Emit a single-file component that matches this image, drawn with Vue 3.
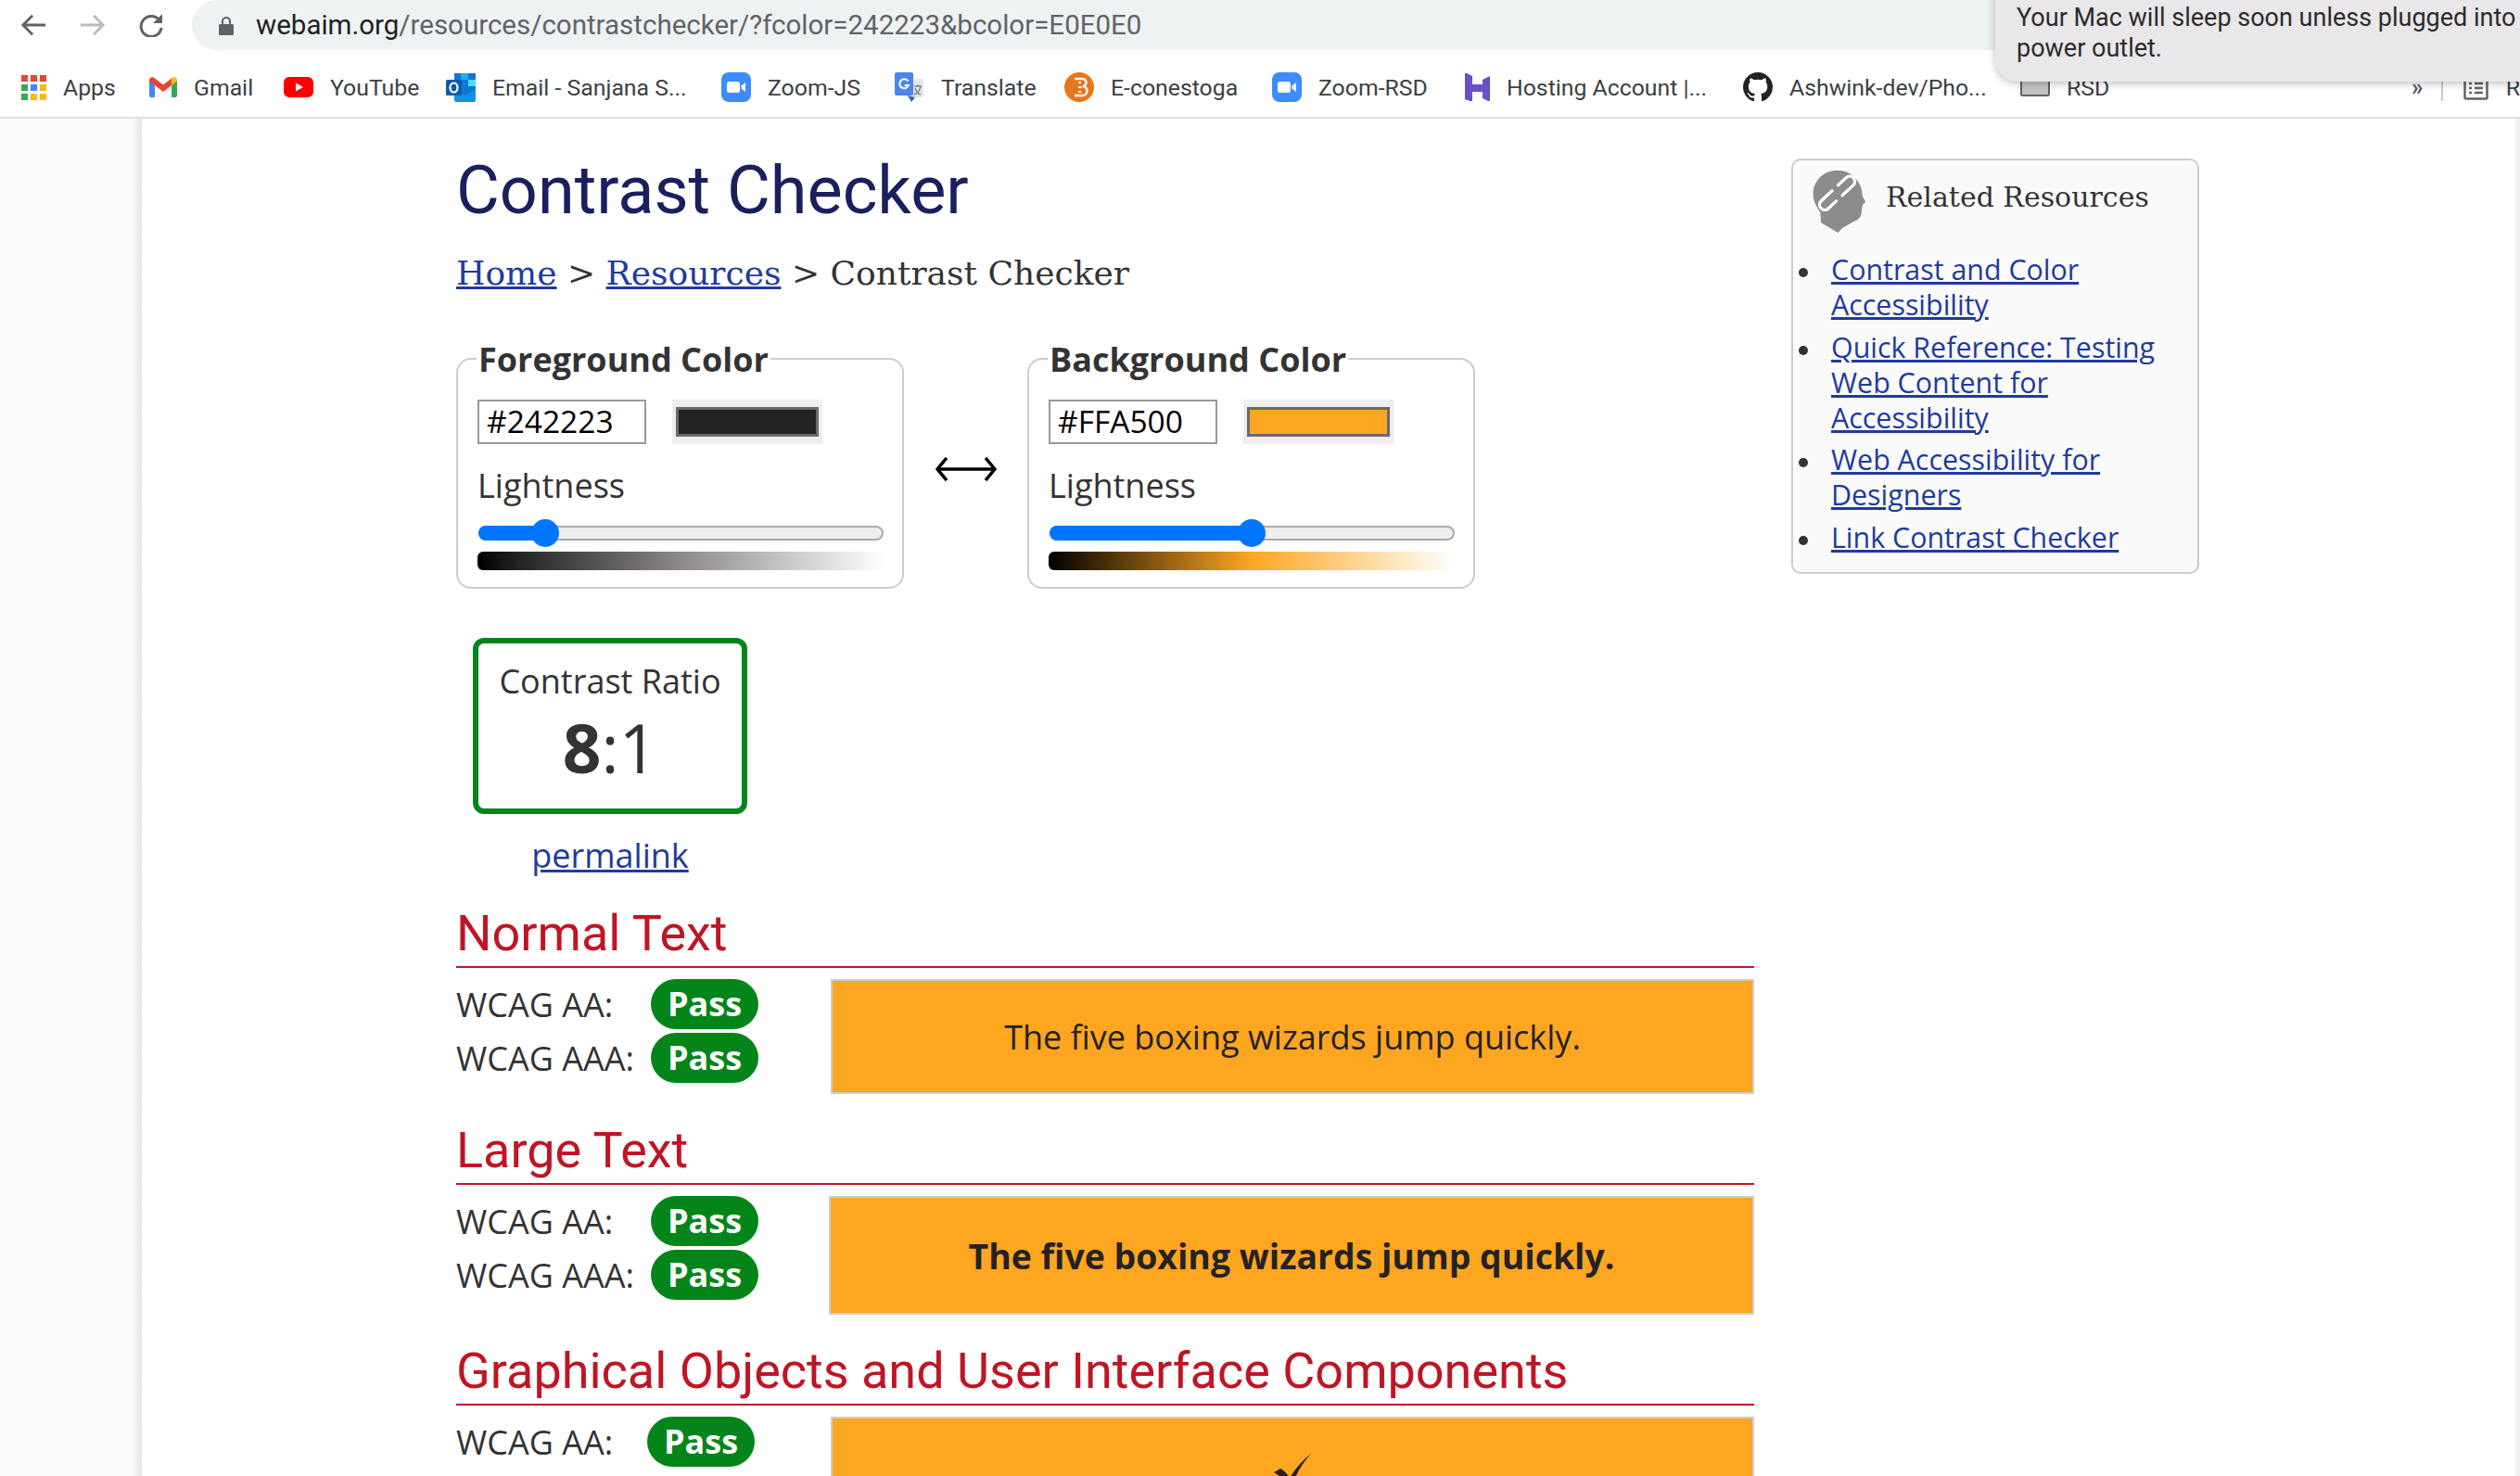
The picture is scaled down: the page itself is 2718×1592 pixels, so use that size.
<template>
  <div class="screen">
    <div class="toast">Your Mac will sleep soon unless plugged into<br />power outlet.</div>

    <div class="toolbar">
      <svg class="nav" viewBox="0 0 30 26" fill="none" stroke="#5f6368" stroke-width="3"><path d="M29 13H4M14 2 3 13l11 11" /></svg>
      <svg class="nav fwd" viewBox="0 0 30 26" fill="none" stroke="#b9bbbe" stroke-width="3"><path d="M1 13h25M16 2l11 11-11 11" /></svg>
      <svg class="nav reload" viewBox="0 0 28 26" fill="none"><path d="M23 8a11 11 0 1 0 2 8" stroke="#5f6368" stroke-width="3" /><path d="M26 1v10H16z" fill="#5f6368" /></svg>
      <div class="address">
        <svg class="lock" viewBox="0 0 16 21"><path d="M3 9V6a5 5 0 0 1 10 0v3h1.500A1.500 1.500 0 0 1 16 10.500v9a1.500 1.500 0 0 1-1.500 1.500h-13A1.500 1.500 0 0 1 0 19.500v-9A1.500 1.500 0 0 1 1.500 9zm2 0h6V6a3 3 0 0 0-6 0z" fill="#5f6368" /></svg>
        <span class="url"><b>webaim.org</b>/resources/contrastchecker/?fcolor=242223&amp;bcolor=E0E0E0</span>
      </div>
    </div>

    <div class="bookmarks">
      <div v-for="b in bookmarks" :key="b.label" class="bookmark">
        <span v-if="b.icon === 'apps'" class="apps">
          <i v-for="(c, i) in appColors" :key="i" :style="{ background: c }"></i>
        </span>
        <svg v-else-if="b.icon === 'gmail'" class="ico gmail" viewBox="0 0 30 22">
          <path d="M0 3v17a2 2 0 0 0 2 2h4V9z" fill="#4285f4" />
          <path d="M30 3v17a2 2 0 0 1-2 2h-4V9z" fill="#34a853" />
          <path d="M0 3.500C0 .5 3 -.8 5.500 1L15 8.500 24 1.500 24 9 15 16 6 9 0 4.500z" fill="#ea4335" />
          <path d="M24 1.500C26.500 -.8 30 .5 30 3.500V4.500L24 9z" fill="#fbbc05" />
        </svg>
        <svg v-else-if="b.icon === 'youtube'" class="ico yt" viewBox="0 0 32 22">
          <rect width="32" height="22" rx="6" fill="#f00" />
          <path d="M13 6.500v9l8-4.500z" fill="#fff" />
        </svg>
        <svg v-else-if="b.icon === 'outlook'" class="ico" viewBox="0 0 32 32">
          <rect x="9" y="1" width="23" height="27" fill="#0f78d4" />
          <rect x="16" y="1" width="8" height="7" fill="#28a8ea" />
          <rect x="24" y="8" width="8" height="7" fill="#50d9ff" />
          <path d="M9 18l12 7 11-7v12a2 2 0 0 1-2 2H11a2 2 0 0 1-2-2z" fill="#1490df" />
          <rect y="8" width="17" height="17" rx="1.500" fill="#0a5ca8" />
          <ellipse cx="8.500" cy="16.500" rx="4" ry="5" fill="none" stroke="#fff" stroke-width="2.200" />
        </svg>
        <svg v-else-if="b.icon === 'zoom'" class="ico" viewBox="0 0 32 32">
          <rect width="32" height="32" rx="8" fill="#3d8bfd" />
          <rect x="6" y="10" width="14" height="12" rx="2.500" fill="#fff" />
          <path d="M21.500 14.500 26 11v10l-4.500-3.500z" fill="#fff" />
        </svg>
        <svg v-else-if="b.icon === 'translate'" class="ico" viewBox="0 0 32 32">
          <rect x="12" y="7" width="19" height="20" rx="1.500" fill="#e3e6ea" />
          <rect width="20" height="25" rx="2" fill="#4a86e8" />
          <path d="M14 25l4 7 4-5z" fill="#3a62b8" />
          <path d="M14.500 9.500A5 5 0 1 0 15 14h-4.500" fill="none" stroke="#fff" stroke-width="2" />
          <path d="M21 15h8M25 13v2M28 15c-1 5-4 8-7 9M22 17c1 3 3 6 6 7" fill="none" stroke="#7d8590" stroke-width="1.400" />
        </svg>
        <svg v-else-if="b.icon === 'conestoga'" class="ico" viewBox="0 0 32 32">
          <circle cx="16" cy="16" r="16" fill="#e8761c" />
          <path d="M11 7h8a4 4 0 0 1 1 8 4.500 4.500 0 0 1-1 10h-8" fill="none" stroke="#fff" stroke-width="2.500" />
          <path d="M15 11h3M15 16h4M15 21h3" stroke="#fff" stroke-width="2" />
        </svg>
        <svg v-else-if="b.icon === 'hosting'" class="ico host" viewBox="0 0 27 30">
          <path d="M0 0l8 4v9l11 0V8l8-4v12H0z" fill="#6a4fc8" transform="translate(0 -1)" />
          <path d="M0 14h27v16l-8-4v-7H8v11l-8-3z" fill="#6a4fc8" transform="translate(0 1)" />
        </svg>
        <svg v-else-if="b.icon === 'github'" class="ico" viewBox="0 0 16 16">
          <path fill="#1f2328" d="M8 0C3.580 0 0 3.580 0 8c0 3.540 2.290 6.530 5.470 7.590.4.070.55-.17.55-.38 0-.19-.01-.82-.01-1.490-2.010.37-2.530-.49-2.690-.94-.09-.23-.48-.94-.82-1.130-.28-.15-.68-.52-.01-.53.63-.01 1.080.58 1.230.82.720 1.210 1.870.870 2.330.660.070-.520.280-.870.510-1.070-1.780-.2-3.640-.89-3.640-3.950 0-.87.310-1.590.820-2.150-.08-.2-.36-1.020.08-2.120 0 0 .67-.21 2.200.82.640-.18 1.320-.27 2-.27s1.360.09 2 .27c1.530-1.040 2.200-.82 2.200-.82.440 1.100.16 1.920.08 2.120.51.560.82 1.270.82 2.150 0 3.070-1.870 3.750-3.650 3.950.29.250.54.730.54 1.480 0 1.070-.01 1.930-.01 2.200 0 .21.150.46.550.38A8.010 8.010 0 0 0 16 8c0-4.420-3.580-8-8-8z" />
        </svg>
        <svg v-else-if="b.icon === 'folder'" class="ico folder" viewBox="0 0 32 20">
          <rect x="1" y="1" width="30" height="18" rx="1.500" fill="#c4c4c4" stroke="#5f6368" stroke-width="2" />
        </svg>
        <span class="bm-label" :style="{ width: b.w + 'px' }">{{ b.label }}</span>
      </div>
      <div class="spacer"></div>
      <div class="tail">
        <span class="more">»</span>
        <span class="sep"></span>
        <svg class="list" viewBox="0 0 27 28" fill="none" stroke="#5f6368" stroke-width="2.500">
          <rect x="1.500" y="1.500" width="24" height="25" rx="1.500" />
          <path d="M6 10h3M12 10h9M6 15h3M12 15h9M6 20h3M12 20h9" />
        </svg>
        <span class="bm-label">R</span>
      </div>
    </div>

    <div class="page">
      <div class="gutter"></div>
      <div class="sheet">
        <main class="content">
          <h1>Contrast Checker</h1>
          <p class="crumbs"><a>Home</a> &gt; <a>Resources</a> &gt; Contrast Checker</p>

          <div class="pickers">
            <fieldset v-for="p in pickers" :key="p.title" class="picker">
              <legend>{{ p.title }}</legend>
              <div class="color-row">
                <input class="hex" type="text" :value="p.hex" readonly />
                <div class="swatch"><div :style="{ background: p.swatch }"></div></div>
              </div>
              <div class="lightness">Lightness</div>
              <div class="slider">
                <div class="fill" :style="{ width: p.pos + 'px' }"></div>
                <div class="thumb" :style="{ left: p.pos - 15 + 'px' }"></div>
              </div>
              <div class="ramp" :style="{ background: p.ramp }"></div>
            </fieldset>
            <svg class="swap" viewBox="0 0 66 26" fill="none" stroke="#000">
              <path d="M4 13h58" stroke-width="3.500" />
              <path d="M12 1 2 13l10 12M54 1l10 12-10 12" stroke-width="3.500" />
            </svg>
          </div>

          <div class="ratio-wrap">
            <div class="ratio">
              <div class="ratio-title">Contrast Ratio</div>
              <div class="ratio-value"><b>8</b>:1</div>
            </div>
            <a class="permalink">permalink</a>
          </div>

          <section class="result">
            <h2>Normal Text</h2>
            <div class="result-body">
              <div class="levels">
                <div class="level"><span class="lvl">WCAG AA:</span><span class="pass">Pass</span></div>
                <div class="level"><span class="lvl">WCAG AAA:</span><span class="pass">Pass</span></div>
              </div>
              <div class="sample normal">The five boxing wizards jump quickly.</div>
            </div>
          </section>

          <section class="result">
            <h2>Large Text</h2>
            <div class="result-body">
              <div class="levels wide">
                <div class="level"><span class="lvl">WCAG AA:</span><span class="pass">Pass</span></div>
                <div class="level"><span class="lvl">WCAG AAA:</span><span class="pass">Pass</span></div>
              </div>
              <div class="sample large">The five boxing wizards jump quickly.</div>
            </div>
          </section>

          <section class="result">
            <h2>Graphical Objects and User Interface Components</h2>
            <div class="result-body">
              <div class="levels">
                <div class="level tight"><span class="lvl">WCAG AA:</span><span class="pass">Pass</span></div>
              </div>
              <div class="sample graphic">
                <svg class="check" viewBox="0 0 44 40"><path d="M42 0C32 10 24 24 20 38h-3C13 30 8 25 1 21l7-4c4 2 7 5 10 10C24 17 32 8 42 0z" fill="#242223" /></svg>
              </div>
            </div>
          </section>
        </main>

        <aside class="related">
          <div class="related-head">
            <svg class="head" viewBox="165 98 175 210">
              <path d="M245 100C200 100 166 135 166 178c0 27 14 44 24 62l2 32 56 33 14-15 38-22c18-6 25-18 25-32l3-21 10-11-10-19C328 140 295 100 245 100z" fill="#8c8c8c" />
              <g fill="none" stroke="#fff" stroke-width="10" stroke-linecap="round" transform="rotate(-43 245 175)">
                <path d="M238 158H189a17 17 0 0 0 0 34h36" />
                <path d="M252 192h49a17 17 0 0 0 0-34h-36" />
              </g>
            </svg>
            <h3>Related Resources</h3>
          </div>
          <ul>
            <li v-for="r in related" :key="r"><a>{{ r }}</a></li>
          </ul>
        </aside>
      </div>
      <div class="gutter-right"></div>
    </div>
  </div>
</template>

<script setup>
const appColors = ["#ea4335", "#ea4335", "#ea4335", "#34a853", "#4285f4", "#fbbc05", "#34a853", "#fbbc05", "#fbbc05"];

const bookmarks = [
  { icon: "apps", label: "Apps", w: 59 },
  { icon: "gmail", label: "Gmail", w: 63 },
  { icon: "youtube", label: "YouTube", w: 91 },
  { icon: "outlook", label: "Email - Sanjana S...", w: 213 },
  { icon: "zoom", label: "Zoom-JS", w: 103 },
  { icon: "translate", label: "Translate", w: 99 },
  { icon: "conestoga", label: "E-conestoga", w: 140 },
  { icon: "zoom", label: "Zoom-RSD", w: 124 },
  { icon: "hosting", label: "Hosting Account |...", w: 221 },
  { icon: "github", label: "Ashwink-dev/Pho...", w: 215 },
  { icon: "folder", label: "RSD", w: 48 },
];

const pickers = [
  {
    title: "Foreground Color",
    hex: "#242223",
    swatch: "#242223",
    pos: 70,
    ramp: "linear-gradient(to right, #000, #242223 10%, #8d8889 50%, #fff)",
  },
  {
    title: "Background Color",
    hex: "#FFA500",
    swatch: "#ffa621",
    pos: 216,
    ramp: "linear-gradient(to right, #000, #ffa621 50%, #fff)",
  },
];

const related = [
  "Contrast and Color Accessibility",
  "Quick Reference: Testing Web Content for Accessibility",
  "Web Accessibility for Designers",
  "Link Contrast Checker",
];
</script>

<style>
html,
body {
  margin: 0;
  overflow: hidden;
  background: #fff;
}
</style>

<style scoped>
.screen {
  position: relative;
  width: 2718px;
  height: 1592px;
  overflow: hidden;
  font-family: "Open Sans", sans-serif;
  color: #333;
}

.toast {
  position: absolute;
  top: -20px;
  left: 2152px;
  width: 600px;
  height: 108px;
  box-sizing: border-box;
  padding: 23px 0 0 23px;
  border-radius: 0 0 0 24px;
  background: #e9e7e9;
  box-shadow: 0 2px 10px rgba(0, 0, 0, 0.25);
  font-family: Roboto, sans-serif;
  font-size: 27px;
  line-height: 33px;
  color: #2b2b2b;
  white-space: nowrap;
  z-index: 5;
}

.toolbar {
  display: flex;
  align-items: center;
  height: 54px;
  padding-left: 22px;
}

.nav {
  width: 28px;
  height: 26px;
  flex: none;
}

.fwd {
  margin-left: 36px;
}

.reload {
  margin-left: 35px;
}

.address {
  display: flex;
  align-items: center;
  flex: 1;
  height: 54px;
  margin-left: 30px;
  border-radius: 27px 0 0 27px;
  background: #eff2f3;
}

.lock {
  width: 16px;
  height: 21px;
  margin-left: 29px;
}

.url {
  margin-left: 24px;
  font-family: Roboto, sans-serif;
  font-size: 29.5px;
  color: #5f6368;
  white-space: nowrap;
}

.url b {
  font-weight: 400;
  color: #202124;
}

.bookmarks {
  display: flex;
  align-items: center;
  gap: 34px;
  height: 64px;
  padding: 8px 0 0 23px;
  border-bottom: 2px solid #dde1e5;
}

.bookmark {
  display: flex;
  align-items: center;
  gap: 18px;
  flex: none;
}

.bm-label {
  font-family: Roboto, sans-serif;
  font-size: 24.8px;
  color: #3c4043;
  white-space: nowrap;
}

.apps {
  display: grid;
  grid-template-columns: repeat(3, 7px);
  gap: 3px;
}

.apps i {
  height: 7px;
}

.ico {
  width: 32px;
  height: 32px;
  flex: none;
}

.gmail {
  width: 30px;
  height: 22px;
}

.yt {
  height: 22px;
}

.host {
  width: 27px;
  height: 30px;
}

.folder {
  height: 20px;
}

.spacer {
  flex: 1;
}

.tail {
  display: flex;
  align-items: center;
  flex: none;
  width: 117px;
  overflow: hidden;
}

.more {
  width: 35px;
  font-family: Roboto, sans-serif;
  font-size: 25px;
  font-weight: 700;
  color: #5f6368;
}

.sep {
  width: 2px;
  height: 30px;
  background: #ccc;
  flex: none;
}

.list {
  width: 27px;
  height: 28px;
  margin: 0 19px 0 22px;
  flex: none;
}

.page {
  display: flex;
  height: 1464px;
}

.gutter {
  flex: none;
  width: 153px;
  background: linear-gradient(to right, #fafbfb 142px, #e6e7e7 153px);
}

.gutter-right {
  flex: none;
  width: 5px;
  background: #f1f1f1;
}

.sheet {
  display: flex;
  align-items: flex-start;
  gap: 40px;
  flex: 1;
  padding-left: 339px;
  background: #fff;
}

.content {
  flex: none;
  width: 1400px;
}

h1 {
  margin: 36px 0 0;
  font-family: Roboto, sans-serif;
  font-size: 72px;
  font-weight: 400;
  line-height: 84px;
  color: #1a1f5e;
}

a {
  color: #1f3b9c;
  text-decoration: underline;
}

.crumbs {
  margin: 25px 0 0;
  font-family: "DejaVu Serif", serif;
  font-size: 36px;
  line-height: 44px;
  color: #333;
}

.pickers {
  position: relative;
  display: flex;
  gap: 133px;
  margin: 52px 0 0;
}

.picker {
  box-sizing: border-box;
  width: 483px;
  height: 266px;
  margin: 0;
  padding: 0 21px;
  border: 2px solid #ccc;
  border-radius: 16px;
  min-width: 0;
}

.picker legend {
  position: relative;
  top: 1px;
  padding: 0 2px;
  margin-left: -1px;
  font-size: 36px;
  font-weight: 700;
  line-height: 36px;
  color: #333;
}

.color-row {
  display: flex;
  gap: 28px;
  margin-top: 26px;
}

.hex {
  box-sizing: border-box;
  width: 182px;
  height: 48px;
  padding: 0 8px 2px;
  border: 2px solid #999;
  border-radius: 0;
  outline: none;
  font-family: "Open Sans", sans-serif;
  font-size: 33.5px;
  color: #000;
  background: #fff;
}

.swatch {
  box-sizing: border-box;
  width: 162px;
  height: 48px;
  padding: 8px 4px;
  background: #eee;
}

.swatch div {
  box-sizing: border-box;
  height: 32px;
  border: 3px solid #6a6a6a;
}

.lightness {
  margin-top: 21px;
  font-size: 36px;
  line-height: 48px;
  color: #333;
}

.slider {
  position: relative;
  box-sizing: border-box;
  width: 437px;
  height: 16px;
  margin: 19px 0 0 1px;
  border: 2px solid #aaa;
  border-radius: 8px;
  background: #eee;
}

.fill {
  position: absolute;
  top: -2px;
  left: -2px;
  height: 16px;
  border-radius: 8px 0 0 8px;
  background: #0075ff;
}

.thumb {
  position: absolute;
  top: -9px;
  width: 30px;
  height: 30px;
  border-radius: 50%;
  background: #0075ff;
}

.ramp {
  width: 438px;
  height: 20px;
  margin-top: 12px;
  border-radius: 6px 0 0 6px;
}

.swap {
  position: absolute;
  top: 124px;
  left: 517px;
  width: 66px;
  height: 26px;
}

.ratio-wrap {
  width: 296px;
  margin: 53px 0 0 18px;
  text-align: center;
}

.ratio {
  box-sizing: border-box;
  height: 190px;
  border: 6px solid #03851a;
  border-radius: 12px;
}

.ratio-title {
  margin-top: 16px;
  font-size: 36px;
  line-height: 50px;
  color: #333;
}

.ratio-value {
  margin-top: 2px;
  font-size: 73px;
  line-height: 88px;
  color: #333;
}

.permalink {
  display: inline-block;
  margin-top: 20px;
  font-size: 36px;
  line-height: 50px;
}

.result {
  margin-top: 31px;
}

.ratio-wrap + .result {
  margin-top: 29px;
}

h2 {
  margin: 0;
  padding: 0 0 5px;
  border-bottom: 2px solid #bf1524;
  font-family: Roboto, sans-serif;
  font-size: 54px;
  font-weight: 400;
  line-height: 60px;
  color: #bf1524;
}

.result-body {
  display: flex;
  margin-top: 12px;
}

.levels {
  display: flex;
  flex-direction: column;
  gap: 4px;
  flex: none;
  width: 404px;
}

.levels.wide {
  width: 402px;
}

.level {
  display: flex;
  align-items: center;
  height: 54px;
}

.lvl {
  width: 210px;
  font-size: 36px;
  color: #333;
}

.tight .lvl {
  width: 206px;
}

.pass {
  width: 116px;
  height: 54px;
  border-radius: 27px;
  background: #04851a;
  color: #fff;
  font-size: 36px;
  font-weight: 700;
  line-height: 54px;
  text-align: center;
}

.sample {
  flex: 1;
  box-sizing: border-box;
  display: flex;
  justify-content: center;
  border: 2px solid #ccc;
  background: #ffa621;
  color: #242223;
}

.normal {
  align-items: center;
  height: 124px;
  font-size: 36px;
}

.large {
  align-items: center;
  height: 128px;
  font-size: 37.4px;
  font-weight: 700;
}

.graphic {
  height: 128px;
  padding-top: 37px;
}

.check {
  width: 44px;
  height: 40px;
  margin-left: 2px;
}

.related {
  flex: none;
  box-sizing: border-box;
  width: 440px;
  height: 448px;
  margin-top: 43px;
  border: 2px solid #ccc;
  border-radius: 10px;
  background: #fafafa;
}

.related-head {
  display: flex;
  align-items: center;
  gap: 21px;
  margin: 10px 0 0 21px;
}

.head {
  width: 58px;
  height: 69px;
  flex: none;
}

h3 {
  margin: 0 0 10px;
  font-family: "DejaVu Serif", serif;
  font-size: 30px;
  font-weight: 400;
  color: #333;
}

ul {
  margin: 20px 0 0;
  padding: 0 0 0 41px;
  list-style: none;
  font-size: 30.4px;
  line-height: 38px;
  color: #333;
}

li {
  position: relative;
  margin-bottom: 7.5px;
}

li::before {
  content: "";
  position: absolute;
  top: 17px;
  left: -35px;
  width: 10px;
  height: 10px;
  border-radius: 50%;
  background: #333;
}
</style>
